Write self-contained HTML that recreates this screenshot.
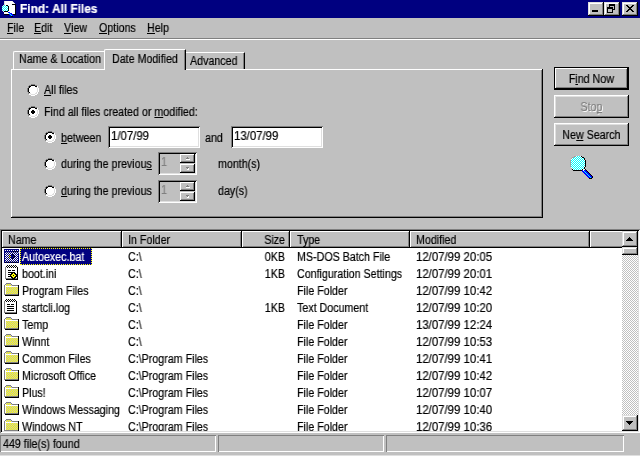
<!DOCTYPE html>
<html><head><meta charset="utf-8">
<style>
*{margin:0;padding:0;box-sizing:border-box}
html,body{width:640px;height:456px;overflow:hidden;background:#c0c0c0}
body{position:relative;font-family:"Liberation Sans",sans-serif;font-size:12px;color:#000;line-height:13px}
.a{position:absolute}
.t{position:absolute;white-space:nowrap;transform:scaleX(.89);transform-origin:0 0;will-change:transform;-webkit-text-stroke:0.2px currentColor}
.n{transform:scaleX(.95)}
u{text-decoration:none;position:relative}
u:after{content:"";position:absolute;left:0;right:0;bottom:1px;height:1px;background:currentColor}
#title{left:0;top:0;width:640px;height:18px;background:#000080}
#title .txt{left:20px;top:3px;color:#fff;font-weight:bold;transform:scaleX(.99)}
.tb{position:absolute;top:2px;width:16px;height:14px;background:#c0c0c0;
 box-shadow:inset -1px -1px #000,inset 1px 1px #dfdfdf,inset -2px -2px #808080,inset 2px 2px #fff}
.menu .t{top:22px}
.field{position:absolute;background:#fff;box-shadow:inset 1px 1px #808080,inset -1px -1px #fff,inset 2px 2px #000,inset -2px -2px #dfdfdf}
.radio{position:absolute;width:12px;height:12px}
.btn{position:absolute;left:554px;width:75px;height:23px;background:#c0c0c0;
 box-shadow:inset -1px -1px #000,inset 1px 1px #fff,inset -2px -2px #808080,inset 2px 2px #dfdfdf}
.btn .t{left:0;width:84px;text-align:center}
.hdr{position:absolute;top:231px;height:17px;background:#c0c0c0;
 box-shadow:inset -1px -1px #000,inset 1px 1px #fff,inset -2px -2px #808080}
.hdr .t{top:3px}
#list{position:absolute;left:0;top:229px;width:640px;height:204px;background:#fff;
 box-shadow:inset 1px 1px #808080,inset -1px -1px #fff,inset 2px 2px #000,inset -2px -2px #dfdfdf}
#rows{position:absolute;left:2px;top:248px;width:620px;height:183px;overflow:hidden}
.row{position:absolute;left:0;width:620px;height:17px}
.row .t{top:3px}
.ico{position:absolute}
.nm{left:20px}
.c2{left:126px}
.sz{left:190px;width:93px;text-align:right;transform-origin:100% 0}
.c4{left:295px}
.c5{left:414px}
.sel{color:#fff}
.selbox{position:absolute;left:18px;top:0;width:72px;height:17px;background:#000080;outline:1px dotted #ffff00;outline-offset:-1px}
.sp{position:absolute;top:435px;height:17px;box-shadow:inset 1px 1px #808080,inset -1px -1px #fff}
.dis{color:#808080;text-shadow:1px 1px #fff}
.spin{position:absolute;left:158px;width:39px;height:23px;background:#c0c0c0;
 box-shadow:inset 1px 1px #808080,inset -1px -1px #fff,inset 2px 2px #000,inset -2px -2px #dfdfdf}
.sbtn{position:absolute;left:22px;width:15px;height:9px;background:#c0c0c0;
 box-shadow:inset -1px -1px #000,inset 1px 1px #fff,inset -2px -2px #808080}
.tab{position:absolute;background:#c0c0c0}
.sb{box-shadow:inset -1px -1px #000,inset 1px 1px #dfdfdf,inset -2px -2px #808080,inset 2px 2px #fff}
</style></head><body>

<!-- title bar -->
<div id="title" class="a">
 <svg class="a" style="left:0px;top:0px" width="16" height="17" shape-rendering="crispEdges"><rect x="4" y="1" width="1" height="1" fill="#dfdfdf"/><rect x="5" y="1" width="7" height="1" fill="#ffffff"/><rect x="12" y="1" width="1" height="1" fill="#dfdfdf"/><rect x="4" y="2" width="1" height="1" fill="#dfdfdf"/><rect x="5" y="2" width="8" height="1" fill="#ffffff"/><rect x="13" y="2" width="1" height="1" fill="#dfdfdf"/><rect x="4" y="3" width="1" height="1" fill="#dfdfdf"/><rect x="5" y="3" width="9" height="1" fill="#ffffff"/><rect x="14" y="3" width="1" height="1" fill="#dfdfdf"/><rect x="4" y="4" width="1" height="1" fill="#dfdfdf"/><rect x="5" y="4" width="7" height="1" fill="#ffffff"/><rect x="12" y="4" width="4" height="1" fill="#000000"/><rect x="3" y="5" width="1" height="1" fill="#dfdfdf"/><rect x="4" y="5" width="1" height="1" fill="#00ffff"/><rect x="5" y="5" width="1" height="1" fill="#ffffff"/><rect x="6" y="5" width="2" height="1" fill="#000000"/><rect x="8" y="5" width="7" height="1" fill="#ffffff"/><rect x="15" y="5" width="1" height="1" fill="#000000"/><rect x="2" y="6" width="1" height="1" fill="#dfdfdf"/><rect x="3" y="6" width="1" height="1" fill="#00ffff"/><rect x="4" y="6" width="1" height="1" fill="#ffffff"/><rect x="5" y="6" width="1" height="1" fill="#00ffff"/><rect x="6" y="6" width="1" height="1" fill="#ffffff"/><rect x="7" y="6" width="1" height="1" fill="#00ffff"/><rect x="8" y="6" width="1" height="1" fill="#000000"/><rect x="9" y="6" width="6" height="1" fill="#ffffff"/><rect x="15" y="6" width="1" height="1" fill="#000000"/><rect x="2" y="7" width="1" height="1" fill="#00ffff"/><rect x="3" y="7" width="1" height="1" fill="#ffffff"/><rect x="4" y="7" width="1" height="1" fill="#00ffff"/><rect x="5" y="7" width="1" height="1" fill="#ffffff"/><rect x="6" y="7" width="1" height="1" fill="#00ffff"/><rect x="7" y="7" width="1" height="1" fill="#ffffff"/><rect x="8" y="7" width="1" height="1" fill="#000000"/><rect x="9" y="7" width="6" height="1" fill="#ffffff"/><rect x="15" y="7" width="1" height="1" fill="#000000"/><rect x="2" y="8" width="1" height="1" fill="#ffffff"/><rect x="3" y="8" width="1" height="1" fill="#00ffff"/><rect x="4" y="8" width="1" height="1" fill="#ffffff"/><rect x="5" y="8" width="1" height="1" fill="#00ffff"/><rect x="6" y="8" width="1" height="1" fill="#ffffff"/><rect x="7" y="8" width="1" height="1" fill="#00ffff"/><rect x="8" y="8" width="1" height="1" fill="#000000"/><rect x="9" y="8" width="6" height="1" fill="#ffffff"/><rect x="15" y="8" width="1" height="1" fill="#000000"/><rect x="2" y="9" width="1" height="1" fill="#00ffff"/><rect x="3" y="9" width="1" height="1" fill="#ffffff"/><rect x="4" y="9" width="1" height="1" fill="#00ffff"/><rect x="5" y="9" width="1" height="1" fill="#ffffff"/><rect x="6" y="9" width="1" height="1" fill="#00ffff"/><rect x="7" y="9" width="1" height="1" fill="#ffffff"/><rect x="8" y="9" width="1" height="1" fill="#000000"/><rect x="9" y="9" width="6" height="1" fill="#ffffff"/><rect x="15" y="9" width="1" height="1" fill="#000000"/><rect x="2" y="10" width="1" height="1" fill="#dfdfdf"/><rect x="3" y="10" width="1" height="1" fill="#00ffff"/><rect x="4" y="10" width="1" height="1" fill="#ffffff"/><rect x="5" y="10" width="1" height="1" fill="#00ffff"/><rect x="6" y="10" width="1" height="1" fill="#ffffff"/><rect x="7" y="10" width="1" height="1" fill="#00ffff"/><rect x="8" y="10" width="1" height="1" fill="#000000"/><rect x="9" y="10" width="6" height="1" fill="#ffffff"/><rect x="15" y="10" width="1" height="1" fill="#000000"/><rect x="3" y="11" width="1" height="1" fill="#dfdfdf"/><rect x="4" y="11" width="4" height="1" fill="#000000"/><rect x="8" y="11" width="7" height="1" fill="#ffffff"/><rect x="15" y="11" width="1" height="1" fill="#000000"/><rect x="4" y="12" width="4" height="1" fill="#ffffff"/><rect x="8" y="12" width="2" height="1" fill="#0000ff"/><rect x="10" y="12" width="5" height="1" fill="#ffffff"/><rect x="15" y="12" width="1" height="1" fill="#000000"/><rect x="4" y="13" width="5" height="1" fill="#ffffff"/><rect x="9" y="13" width="1" height="1" fill="#00ffff"/><rect x="10" y="13" width="2" height="1" fill="#0000ff"/><rect x="12" y="13" width="3" height="1" fill="#ffffff"/><rect x="15" y="13" width="1" height="1" fill="#000000"/><rect x="4" y="14" width="5" height="1" fill="#000000"/><rect x="9" y="14" width="1" height="1" fill="#0000ff"/><rect x="10" y="14" width="1" height="1" fill="#00ffff"/><rect x="11" y="14" width="2" height="1" fill="#0000ff"/><rect x="13" y="14" width="3" height="1" fill="#000000"/><rect x="10" y="15" width="1" height="1" fill="#0000ff"/><rect x="11" y="15" width="1" height="1" fill="#00ffff"/><rect x="12" y="15" width="2" height="1" fill="#0000ff"/><rect x="11" y="16" width="2" height="1" fill="#000000"/></svg>
 <div class="t txt">Find: All Files</div>
 <div class="tb" style="left:588px"><div class="a" style="left:4px;top:8px;width:6px;height:2px;background:#000"></div></div>
 <div class="tb" style="left:604px">
  <div class="a" style="left:5px;top:2px;width:6px;height:6px;border:1px solid #000;border-top-width:2px"></div>
  <div class="a" style="left:3px;top:5px;width:6px;height:6px;border:1px solid #000;border-top-width:2px;background:#c0c0c0"></div>
 </div>
 <div class="tb" style="left:622px">
  <svg class="a" style="left:4px;top:3px" width="8" height="7" viewBox="0 0 8 7" shape-rendering="crispEdges"><path d="M0 0h2v1h1v1h2v-1h1v-1h2v1h-1v1h-1v1h-1v1h1v1h1v1h1v1h-2v-1h-1v-1h-2v1h-1v1h-2v-1h1v-1h1v-1h1v-1h-1v-1h-1v-1h-1z" fill="#000"/></svg>
 </div>
</div>

<!-- menu -->
<div class="menu">
 <div class="t" style="left:7px"><u>F</u>ile</div>
 <div class="t" style="left:34px"><u>E</u>dit</div>
 <div class="t" style="left:64px"><u>V</u>iew</div>
 <div class="t" style="left:99px"><u>O</u>ptions</div>
 <div class="t" style="left:147px"><u>H</u>elp</div>
</div>
<div class="a" style="left:0;top:38px;width:640px;height:1px;background:#808080"></div>
<div class="a" style="left:0;top:39px;width:640px;height:1px;background:#fff"></div>

<!-- tabs -->
<div class="tab" style="left:13px;top:51px;width:91px;height:18px;border-left:1px solid #fff;border-top:1px solid #fff;border-top-left-radius:2px"></div>
<div class="t" style="left:19px;top:53px">Name &amp; Location</div>
<div class="tab" style="left:186px;top:52px;width:59px;height:17px;border-top:1px solid #fff;border-right:1px solid #000;box-shadow:inset -1px 0 #808080"></div>
<div class="t" style="left:190px;top:55px">Advanced</div>
<!-- panel -->
<div class="a" style="left:11px;top:69px;width:532px;height:149px;box-shadow:inset -1px -1px #000,inset 1px 1px #fff,inset -2px -2px #808080"></div>
<div class="tab" style="left:104px;top:49px;width:82px;height:21px;border-left:1px solid #fff;border-top:1px solid #fff;border-right:1px solid #000;box-shadow:inset -1px 0 #808080;border-top-left-radius:2px;border-top-right-radius:1px"></div>
<div class="t" style="left:112px;top:53px">Date Modified</div>

<!-- radios -->
<svg class="a" width="0" height="0"></svg>
<svg class="a" style="left:27px;top:84px" width="12" height="12" shape-rendering="crispEdges"><rect x="4" y="0" width="4" height="1" fill="#808080"/><rect x="2" y="1" width="2" height="1" fill="#808080"/><rect x="4" y="1" width="4" height="1" fill="#000"/><rect x="8" y="1" width="2" height="1" fill="#808080"/><rect x="1" y="2" width="1" height="1" fill="#808080"/><rect x="2" y="2" width="2" height="1" fill="#000"/><rect x="4" y="2" width="4" height="1" fill="#fff"/><rect x="8" y="2" width="2" height="1" fill="#000"/><rect x="10" y="2" width="1" height="1" fill="#fff"/><rect x="1" y="3" width="1" height="1" fill="#808080"/><rect x="2" y="3" width="1" height="1" fill="#000"/><rect x="3" y="3" width="6" height="1" fill="#fff"/><rect x="9" y="3" width="1" height="1" fill="#dfdfdf"/><rect x="10" y="3" width="1" height="1" fill="#fff"/><rect x="0" y="4" width="1" height="1" fill="#808080"/><rect x="1" y="4" width="1" height="1" fill="#000"/><rect x="2" y="4" width="8" height="1" fill="#fff"/><rect x="10" y="4" width="1" height="1" fill="#dfdfdf"/><rect x="11" y="4" width="1" height="1" fill="#fff"/><rect x="0" y="5" width="1" height="1" fill="#808080"/><rect x="1" y="5" width="1" height="1" fill="#000"/><rect x="2" y="5" width="8" height="1" fill="#fff"/><rect x="10" y="5" width="1" height="1" fill="#dfdfdf"/><rect x="11" y="5" width="1" height="1" fill="#fff"/><rect x="0" y="6" width="1" height="1" fill="#808080"/><rect x="1" y="6" width="1" height="1" fill="#000"/><rect x="2" y="6" width="8" height="1" fill="#fff"/><rect x="10" y="6" width="1" height="1" fill="#dfdfdf"/><rect x="11" y="6" width="1" height="1" fill="#fff"/><rect x="0" y="7" width="1" height="1" fill="#808080"/><rect x="1" y="7" width="1" height="1" fill="#000"/><rect x="2" y="7" width="8" height="1" fill="#fff"/><rect x="10" y="7" width="1" height="1" fill="#dfdfdf"/><rect x="11" y="7" width="1" height="1" fill="#fff"/><rect x="1" y="8" width="1" height="1" fill="#808080"/><rect x="2" y="8" width="1" height="1" fill="#000"/><rect x="3" y="8" width="6" height="1" fill="#fff"/><rect x="9" y="8" width="1" height="1" fill="#dfdfdf"/><rect x="10" y="8" width="1" height="1" fill="#fff"/><rect x="1" y="9" width="1" height="1" fill="#808080"/><rect x="2" y="9" width="2" height="1" fill="#dfdfdf"/><rect x="4" y="9" width="4" height="1" fill="#fff"/><rect x="8" y="9" width="2" height="1" fill="#dfdfdf"/><rect x="10" y="9" width="1" height="1" fill="#fff"/><rect x="2" y="10" width="2" height="1" fill="#fff"/><rect x="4" y="10" width="4" height="1" fill="#dfdfdf"/><rect x="8" y="10" width="2" height="1" fill="#fff"/><rect x="4" y="11" width="4" height="1" fill="#fff"/></svg>
<div class="t" style="left:44px;top:84px"><u>A</u>ll files</div>
<svg class="a" style="left:27px;top:106px" width="12" height="12" shape-rendering="crispEdges"><rect x="4" y="0" width="4" height="1" fill="#808080"/><rect x="2" y="1" width="2" height="1" fill="#808080"/><rect x="4" y="1" width="4" height="1" fill="#000"/><rect x="8" y="1" width="2" height="1" fill="#808080"/><rect x="1" y="2" width="1" height="1" fill="#808080"/><rect x="2" y="2" width="2" height="1" fill="#000"/><rect x="4" y="2" width="4" height="1" fill="#fff"/><rect x="8" y="2" width="2" height="1" fill="#000"/><rect x="10" y="2" width="1" height="1" fill="#fff"/><rect x="1" y="3" width="1" height="1" fill="#808080"/><rect x="2" y="3" width="1" height="1" fill="#000"/><rect x="3" y="3" width="6" height="1" fill="#fff"/><rect x="9" y="3" width="1" height="1" fill="#dfdfdf"/><rect x="10" y="3" width="1" height="1" fill="#fff"/><rect x="0" y="4" width="1" height="1" fill="#808080"/><rect x="1" y="4" width="1" height="1" fill="#000"/><rect x="2" y="4" width="8" height="1" fill="#fff"/><rect x="10" y="4" width="1" height="1" fill="#dfdfdf"/><rect x="11" y="4" width="1" height="1" fill="#fff"/><rect x="0" y="5" width="1" height="1" fill="#808080"/><rect x="1" y="5" width="1" height="1" fill="#000"/><rect x="2" y="5" width="8" height="1" fill="#fff"/><rect x="10" y="5" width="1" height="1" fill="#dfdfdf"/><rect x="11" y="5" width="1" height="1" fill="#fff"/><rect x="0" y="6" width="1" height="1" fill="#808080"/><rect x="1" y="6" width="1" height="1" fill="#000"/><rect x="2" y="6" width="8" height="1" fill="#fff"/><rect x="10" y="6" width="1" height="1" fill="#dfdfdf"/><rect x="11" y="6" width="1" height="1" fill="#fff"/><rect x="0" y="7" width="1" height="1" fill="#808080"/><rect x="1" y="7" width="1" height="1" fill="#000"/><rect x="2" y="7" width="8" height="1" fill="#fff"/><rect x="10" y="7" width="1" height="1" fill="#dfdfdf"/><rect x="11" y="7" width="1" height="1" fill="#fff"/><rect x="1" y="8" width="1" height="1" fill="#808080"/><rect x="2" y="8" width="1" height="1" fill="#000"/><rect x="3" y="8" width="6" height="1" fill="#fff"/><rect x="9" y="8" width="1" height="1" fill="#dfdfdf"/><rect x="10" y="8" width="1" height="1" fill="#fff"/><rect x="1" y="9" width="1" height="1" fill="#808080"/><rect x="2" y="9" width="2" height="1" fill="#dfdfdf"/><rect x="4" y="9" width="4" height="1" fill="#fff"/><rect x="8" y="9" width="2" height="1" fill="#dfdfdf"/><rect x="10" y="9" width="1" height="1" fill="#fff"/><rect x="2" y="10" width="2" height="1" fill="#fff"/><rect x="4" y="10" width="4" height="1" fill="#dfdfdf"/><rect x="8" y="10" width="2" height="1" fill="#fff"/><rect x="4" y="11" width="4" height="1" fill="#fff"/><rect x="5" y="4" width="2" height="4" fill="#000"/><rect x="4" y="5" width="4" height="2" fill="#000"/></svg>
<div class="t" style="left:44px;top:106px">Find all files created or <u>m</u>odified:</div>
<svg class="a" style="left:44px;top:131px" width="12" height="12" shape-rendering="crispEdges"><rect x="4" y="0" width="4" height="1" fill="#808080"/><rect x="2" y="1" width="2" height="1" fill="#808080"/><rect x="4" y="1" width="4" height="1" fill="#000"/><rect x="8" y="1" width="2" height="1" fill="#808080"/><rect x="1" y="2" width="1" height="1" fill="#808080"/><rect x="2" y="2" width="2" height="1" fill="#000"/><rect x="4" y="2" width="4" height="1" fill="#fff"/><rect x="8" y="2" width="2" height="1" fill="#000"/><rect x="10" y="2" width="1" height="1" fill="#fff"/><rect x="1" y="3" width="1" height="1" fill="#808080"/><rect x="2" y="3" width="1" height="1" fill="#000"/><rect x="3" y="3" width="6" height="1" fill="#fff"/><rect x="9" y="3" width="1" height="1" fill="#dfdfdf"/><rect x="10" y="3" width="1" height="1" fill="#fff"/><rect x="0" y="4" width="1" height="1" fill="#808080"/><rect x="1" y="4" width="1" height="1" fill="#000"/><rect x="2" y="4" width="8" height="1" fill="#fff"/><rect x="10" y="4" width="1" height="1" fill="#dfdfdf"/><rect x="11" y="4" width="1" height="1" fill="#fff"/><rect x="0" y="5" width="1" height="1" fill="#808080"/><rect x="1" y="5" width="1" height="1" fill="#000"/><rect x="2" y="5" width="8" height="1" fill="#fff"/><rect x="10" y="5" width="1" height="1" fill="#dfdfdf"/><rect x="11" y="5" width="1" height="1" fill="#fff"/><rect x="0" y="6" width="1" height="1" fill="#808080"/><rect x="1" y="6" width="1" height="1" fill="#000"/><rect x="2" y="6" width="8" height="1" fill="#fff"/><rect x="10" y="6" width="1" height="1" fill="#dfdfdf"/><rect x="11" y="6" width="1" height="1" fill="#fff"/><rect x="0" y="7" width="1" height="1" fill="#808080"/><rect x="1" y="7" width="1" height="1" fill="#000"/><rect x="2" y="7" width="8" height="1" fill="#fff"/><rect x="10" y="7" width="1" height="1" fill="#dfdfdf"/><rect x="11" y="7" width="1" height="1" fill="#fff"/><rect x="1" y="8" width="1" height="1" fill="#808080"/><rect x="2" y="8" width="1" height="1" fill="#000"/><rect x="3" y="8" width="6" height="1" fill="#fff"/><rect x="9" y="8" width="1" height="1" fill="#dfdfdf"/><rect x="10" y="8" width="1" height="1" fill="#fff"/><rect x="1" y="9" width="1" height="1" fill="#808080"/><rect x="2" y="9" width="2" height="1" fill="#dfdfdf"/><rect x="4" y="9" width="4" height="1" fill="#fff"/><rect x="8" y="9" width="2" height="1" fill="#dfdfdf"/><rect x="10" y="9" width="1" height="1" fill="#fff"/><rect x="2" y="10" width="2" height="1" fill="#fff"/><rect x="4" y="10" width="4" height="1" fill="#dfdfdf"/><rect x="8" y="10" width="2" height="1" fill="#fff"/><rect x="4" y="11" width="4" height="1" fill="#fff"/><rect x="5" y="4" width="2" height="4" fill="#000"/><rect x="4" y="5" width="4" height="2" fill="#000"/></svg>
<div class="t" style="left:61px;top:132px"><u>b</u>etween</div>
<div class="field" style="left:108px;top:126px;width:92px;height:22px"></div>
<div class="t n" style="left:111px;top:130px">1/07/99</div>
<div class="t" style="left:205px;top:132px">and</div>
<div class="field" style="left:231px;top:126px;width:92px;height:22px"></div>
<div class="t n" style="left:234px;top:130px">13/07/99</div>
<svg class="a" style="left:44px;top:158px" width="12" height="12" shape-rendering="crispEdges"><rect x="4" y="0" width="4" height="1" fill="#808080"/><rect x="2" y="1" width="2" height="1" fill="#808080"/><rect x="4" y="1" width="4" height="1" fill="#000"/><rect x="8" y="1" width="2" height="1" fill="#808080"/><rect x="1" y="2" width="1" height="1" fill="#808080"/><rect x="2" y="2" width="2" height="1" fill="#000"/><rect x="4" y="2" width="4" height="1" fill="#fff"/><rect x="8" y="2" width="2" height="1" fill="#000"/><rect x="10" y="2" width="1" height="1" fill="#fff"/><rect x="1" y="3" width="1" height="1" fill="#808080"/><rect x="2" y="3" width="1" height="1" fill="#000"/><rect x="3" y="3" width="6" height="1" fill="#fff"/><rect x="9" y="3" width="1" height="1" fill="#dfdfdf"/><rect x="10" y="3" width="1" height="1" fill="#fff"/><rect x="0" y="4" width="1" height="1" fill="#808080"/><rect x="1" y="4" width="1" height="1" fill="#000"/><rect x="2" y="4" width="8" height="1" fill="#fff"/><rect x="10" y="4" width="1" height="1" fill="#dfdfdf"/><rect x="11" y="4" width="1" height="1" fill="#fff"/><rect x="0" y="5" width="1" height="1" fill="#808080"/><rect x="1" y="5" width="1" height="1" fill="#000"/><rect x="2" y="5" width="8" height="1" fill="#fff"/><rect x="10" y="5" width="1" height="1" fill="#dfdfdf"/><rect x="11" y="5" width="1" height="1" fill="#fff"/><rect x="0" y="6" width="1" height="1" fill="#808080"/><rect x="1" y="6" width="1" height="1" fill="#000"/><rect x="2" y="6" width="8" height="1" fill="#fff"/><rect x="10" y="6" width="1" height="1" fill="#dfdfdf"/><rect x="11" y="6" width="1" height="1" fill="#fff"/><rect x="0" y="7" width="1" height="1" fill="#808080"/><rect x="1" y="7" width="1" height="1" fill="#000"/><rect x="2" y="7" width="8" height="1" fill="#fff"/><rect x="10" y="7" width="1" height="1" fill="#dfdfdf"/><rect x="11" y="7" width="1" height="1" fill="#fff"/><rect x="1" y="8" width="1" height="1" fill="#808080"/><rect x="2" y="8" width="1" height="1" fill="#000"/><rect x="3" y="8" width="6" height="1" fill="#fff"/><rect x="9" y="8" width="1" height="1" fill="#dfdfdf"/><rect x="10" y="8" width="1" height="1" fill="#fff"/><rect x="1" y="9" width="1" height="1" fill="#808080"/><rect x="2" y="9" width="2" height="1" fill="#dfdfdf"/><rect x="4" y="9" width="4" height="1" fill="#fff"/><rect x="8" y="9" width="2" height="1" fill="#dfdfdf"/><rect x="10" y="9" width="1" height="1" fill="#fff"/><rect x="2" y="10" width="2" height="1" fill="#fff"/><rect x="4" y="10" width="4" height="1" fill="#dfdfdf"/><rect x="8" y="10" width="2" height="1" fill="#fff"/><rect x="4" y="11" width="4" height="1" fill="#fff"/></svg>
<div class="t" style="left:61px;top:158px">during the previou<u>s</u></div>
<div class="spin" style="top:152px"><div class="t" style="left:3px;top:4px;color:#808080">1</div><div class="sbtn" style="top:2px"><svg class="a" style="left:5px;top:3px" width="5" height="4" shape-rendering="crispEdges"><rect x="2" y="0" width="1" height="1" fill="#808080"/><rect x="1" y="1" width="3" height="1" fill="#808080"/><rect x="1" y="2" width="4" height="1" fill="#fff"/></svg></div><div class="sbtn" style="top:12px"><svg class="a" style="left:5px;top:3px" width="5" height="4" shape-rendering="crispEdges"><rect x="1" y="0" width="3" height="1" fill="#808080"/><rect x="2" y="1" width="1" height="1" fill="#808080"/><rect x="3" y="1" width="1" height="1" fill="#fff"/><rect x="2" y="2" width="2" height="1" fill="#fff"/></svg></div></div>
<div class="t" style="left:218px;top:158px">month(s)</div>
<svg class="a" style="left:44px;top:185px" width="12" height="12" shape-rendering="crispEdges"><rect x="4" y="0" width="4" height="1" fill="#808080"/><rect x="2" y="1" width="2" height="1" fill="#808080"/><rect x="4" y="1" width="4" height="1" fill="#000"/><rect x="8" y="1" width="2" height="1" fill="#808080"/><rect x="1" y="2" width="1" height="1" fill="#808080"/><rect x="2" y="2" width="2" height="1" fill="#000"/><rect x="4" y="2" width="4" height="1" fill="#fff"/><rect x="8" y="2" width="2" height="1" fill="#000"/><rect x="10" y="2" width="1" height="1" fill="#fff"/><rect x="1" y="3" width="1" height="1" fill="#808080"/><rect x="2" y="3" width="1" height="1" fill="#000"/><rect x="3" y="3" width="6" height="1" fill="#fff"/><rect x="9" y="3" width="1" height="1" fill="#dfdfdf"/><rect x="10" y="3" width="1" height="1" fill="#fff"/><rect x="0" y="4" width="1" height="1" fill="#808080"/><rect x="1" y="4" width="1" height="1" fill="#000"/><rect x="2" y="4" width="8" height="1" fill="#fff"/><rect x="10" y="4" width="1" height="1" fill="#dfdfdf"/><rect x="11" y="4" width="1" height="1" fill="#fff"/><rect x="0" y="5" width="1" height="1" fill="#808080"/><rect x="1" y="5" width="1" height="1" fill="#000"/><rect x="2" y="5" width="8" height="1" fill="#fff"/><rect x="10" y="5" width="1" height="1" fill="#dfdfdf"/><rect x="11" y="5" width="1" height="1" fill="#fff"/><rect x="0" y="6" width="1" height="1" fill="#808080"/><rect x="1" y="6" width="1" height="1" fill="#000"/><rect x="2" y="6" width="8" height="1" fill="#fff"/><rect x="10" y="6" width="1" height="1" fill="#dfdfdf"/><rect x="11" y="6" width="1" height="1" fill="#fff"/><rect x="0" y="7" width="1" height="1" fill="#808080"/><rect x="1" y="7" width="1" height="1" fill="#000"/><rect x="2" y="7" width="8" height="1" fill="#fff"/><rect x="10" y="7" width="1" height="1" fill="#dfdfdf"/><rect x="11" y="7" width="1" height="1" fill="#fff"/><rect x="1" y="8" width="1" height="1" fill="#808080"/><rect x="2" y="8" width="1" height="1" fill="#000"/><rect x="3" y="8" width="6" height="1" fill="#fff"/><rect x="9" y="8" width="1" height="1" fill="#dfdfdf"/><rect x="10" y="8" width="1" height="1" fill="#fff"/><rect x="1" y="9" width="1" height="1" fill="#808080"/><rect x="2" y="9" width="2" height="1" fill="#dfdfdf"/><rect x="4" y="9" width="4" height="1" fill="#fff"/><rect x="8" y="9" width="2" height="1" fill="#dfdfdf"/><rect x="10" y="9" width="1" height="1" fill="#fff"/><rect x="2" y="10" width="2" height="1" fill="#fff"/><rect x="4" y="10" width="4" height="1" fill="#dfdfdf"/><rect x="8" y="10" width="2" height="1" fill="#fff"/><rect x="4" y="11" width="4" height="1" fill="#fff"/></svg>
<div class="t" style="left:61px;top:185px"><u>d</u>uring the previous</div>
<div class="spin" style="top:180px"><div class="t" style="left:3px;top:4px;color:#808080">1</div><div class="sbtn" style="top:2px"><svg class="a" style="left:5px;top:3px" width="5" height="4" shape-rendering="crispEdges"><rect x="2" y="0" width="1" height="1" fill="#808080"/><rect x="1" y="1" width="3" height="1" fill="#808080"/><rect x="1" y="2" width="4" height="1" fill="#fff"/></svg></div><div class="sbtn" style="top:12px"><svg class="a" style="left:5px;top:3px" width="5" height="4" shape-rendering="crispEdges"><rect x="1" y="0" width="3" height="1" fill="#808080"/><rect x="2" y="1" width="1" height="1" fill="#808080"/><rect x="3" y="1" width="1" height="1" fill="#fff"/><rect x="2" y="2" width="2" height="1" fill="#fff"/></svg></div></div>
<div class="t" style="left:218px;top:185px">day(s)</div>

<!-- buttons -->
<div class="btn" style="top:67px;box-shadow:inset 0 0 0 1px #000,inset -2px -2px #000,inset 2px 2px #fff,inset -3px -3px #808080"><div class="t" style="top:6px">F<u>i</u>nd Now</div></div>
<div class="btn" style="top:95px"><div class="t dis" style="top:6px">Sto<u>p</u></div></div>
<div class="btn" style="top:123px"><div class="t" style="top:6px">Ne<u>w</u> Search</div></div>
<svg class="a" style="left:568px;top:154px" width="26" height="26" shape-rendering="crispEdges"><rect x="6" y="2" width="2" height="1" fill="#a0a0a0"/><rect x="8" y="2" width="1" height="1" fill="#ffffff"/><rect x="9" y="2" width="1" height="1" fill="#00ffff"/><rect x="10" y="2" width="1" height="1" fill="#ffffff"/><rect x="11" y="2" width="1" height="1" fill="#00ffff"/><rect x="12" y="2" width="1" height="1" fill="#ffffff"/><rect x="13" y="2" width="1" height="1" fill="#000000"/><rect x="4" y="3" width="2" height="1" fill="#a0a0a0"/><rect x="6" y="3" width="1" height="1" fill="#00ffff"/><rect x="7" y="3" width="1" height="1" fill="#ffffff"/><rect x="8" y="3" width="1" height="1" fill="#00ffff"/><rect x="9" y="3" width="1" height="1" fill="#ffffff"/><rect x="10" y="3" width="1" height="1" fill="#00ffff"/><rect x="11" y="3" width="1" height="1" fill="#ffffff"/><rect x="12" y="3" width="1" height="1" fill="#00ffff"/><rect x="13" y="3" width="1" height="1" fill="#ffffff"/><rect x="14" y="3" width="2" height="1" fill="#000000"/><rect x="3" y="4" width="1" height="1" fill="#a0a0a0"/><rect x="4" y="4" width="1" height="1" fill="#ffffff"/><rect x="5" y="4" width="1" height="1" fill="#00ffff"/><rect x="6" y="4" width="1" height="1" fill="#ffffff"/><rect x="7" y="4" width="1" height="1" fill="#00ffff"/><rect x="8" y="4" width="1" height="1" fill="#ffffff"/><rect x="9" y="4" width="1" height="1" fill="#00ffff"/><rect x="10" y="4" width="1" height="1" fill="#ffffff"/><rect x="11" y="4" width="1" height="1" fill="#00ffff"/><rect x="12" y="4" width="1" height="1" fill="#ffffff"/><rect x="13" y="4" width="1" height="1" fill="#00ffff"/><rect x="14" y="4" width="1" height="1" fill="#ffffff"/><rect x="15" y="4" width="1" height="1" fill="#00ffff"/><rect x="16" y="4" width="1" height="1" fill="#000000"/><rect x="3" y="5" width="1" height="1" fill="#ffffff"/><rect x="4" y="5" width="1" height="1" fill="#00ffff"/><rect x="5" y="5" width="1" height="1" fill="#ffffff"/><rect x="6" y="5" width="1" height="1" fill="#00ffff"/><rect x="7" y="5" width="1" height="1" fill="#ffffff"/><rect x="8" y="5" width="1" height="1" fill="#00ffff"/><rect x="9" y="5" width="1" height="1" fill="#ffffff"/><rect x="10" y="5" width="1" height="1" fill="#00ffff"/><rect x="11" y="5" width="1" height="1" fill="#ffffff"/><rect x="12" y="5" width="1" height="1" fill="#00ffff"/><rect x="13" y="5" width="1" height="1" fill="#ffffff"/><rect x="14" y="5" width="1" height="1" fill="#00ffff"/><rect x="15" y="5" width="1" height="1" fill="#ffffff"/><rect x="16" y="5" width="1" height="1" fill="#000000"/><rect x="2" y="6" width="1" height="1" fill="#a0a0a0"/><rect x="3" y="6" width="1" height="1" fill="#00ffff"/><rect x="4" y="6" width="1" height="1" fill="#ffffff"/><rect x="5" y="6" width="1" height="1" fill="#00ffff"/><rect x="6" y="6" width="1" height="1" fill="#ffffff"/><rect x="7" y="6" width="1" height="1" fill="#00ffff"/><rect x="8" y="6" width="1" height="1" fill="#ffffff"/><rect x="9" y="6" width="1" height="1" fill="#00ffff"/><rect x="10" y="6" width="1" height="1" fill="#ffffff"/><rect x="11" y="6" width="1" height="1" fill="#00ffff"/><rect x="12" y="6" width="1" height="1" fill="#ffffff"/><rect x="13" y="6" width="1" height="1" fill="#00ffff"/><rect x="14" y="6" width="1" height="1" fill="#ffffff"/><rect x="15" y="6" width="1" height="1" fill="#00ffff"/><rect x="16" y="6" width="1" height="1" fill="#ffffff"/><rect x="17" y="6" width="1" height="1" fill="#000000"/><rect x="2" y="7" width="1" height="1" fill="#a0a0a0"/><rect x="3" y="7" width="1" height="1" fill="#ffffff"/><rect x="4" y="7" width="1" height="1" fill="#00ffff"/><rect x="5" y="7" width="1" height="1" fill="#ffffff"/><rect x="6" y="7" width="1" height="1" fill="#00ffff"/><rect x="7" y="7" width="1" height="1" fill="#ffffff"/><rect x="8" y="7" width="1" height="1" fill="#00ffff"/><rect x="9" y="7" width="1" height="1" fill="#ffffff"/><rect x="10" y="7" width="1" height="1" fill="#00ffff"/><rect x="11" y="7" width="1" height="1" fill="#ffffff"/><rect x="12" y="7" width="1" height="1" fill="#00ffff"/><rect x="13" y="7" width="1" height="1" fill="#ffffff"/><rect x="14" y="7" width="1" height="1" fill="#00ffff"/><rect x="15" y="7" width="1" height="1" fill="#ffffff"/><rect x="16" y="7" width="1" height="1" fill="#00ffff"/><rect x="17" y="7" width="1" height="1" fill="#000000"/><rect x="2" y="8" width="1" height="1" fill="#a0a0a0"/><rect x="3" y="8" width="1" height="1" fill="#00ffff"/><rect x="4" y="8" width="1" height="1" fill="#ffffff"/><rect x="5" y="8" width="1" height="1" fill="#00ffff"/><rect x="6" y="8" width="1" height="1" fill="#ffffff"/><rect x="7" y="8" width="1" height="1" fill="#00ffff"/><rect x="8" y="8" width="1" height="1" fill="#ffffff"/><rect x="9" y="8" width="1" height="1" fill="#00ffff"/><rect x="10" y="8" width="1" height="1" fill="#ffffff"/><rect x="11" y="8" width="1" height="1" fill="#00ffff"/><rect x="12" y="8" width="1" height="1" fill="#ffffff"/><rect x="13" y="8" width="1" height="1" fill="#00ffff"/><rect x="14" y="8" width="1" height="1" fill="#ffffff"/><rect x="15" y="8" width="1" height="1" fill="#00ffff"/><rect x="16" y="8" width="1" height="1" fill="#ffffff"/><rect x="17" y="8" width="1" height="1" fill="#000000"/><rect x="2" y="9" width="1" height="1" fill="#a0a0a0"/><rect x="3" y="9" width="1" height="1" fill="#ffffff"/><rect x="4" y="9" width="1" height="1" fill="#00ffff"/><rect x="5" y="9" width="1" height="1" fill="#ffffff"/><rect x="6" y="9" width="1" height="1" fill="#00ffff"/><rect x="7" y="9" width="1" height="1" fill="#ffffff"/><rect x="8" y="9" width="1" height="1" fill="#00ffff"/><rect x="9" y="9" width="1" height="1" fill="#ffffff"/><rect x="10" y="9" width="1" height="1" fill="#00ffff"/><rect x="11" y="9" width="1" height="1" fill="#ffffff"/><rect x="12" y="9" width="1" height="1" fill="#00ffff"/><rect x="13" y="9" width="1" height="1" fill="#ffffff"/><rect x="14" y="9" width="1" height="1" fill="#00ffff"/><rect x="15" y="9" width="1" height="1" fill="#ffffff"/><rect x="16" y="9" width="1" height="1" fill="#00ffff"/><rect x="17" y="9" width="1" height="1" fill="#000000"/><rect x="2" y="10" width="1" height="1" fill="#a0a0a0"/><rect x="3" y="10" width="1" height="1" fill="#00ffff"/><rect x="4" y="10" width="1" height="1" fill="#ffffff"/><rect x="5" y="10" width="1" height="1" fill="#00ffff"/><rect x="6" y="10" width="1" height="1" fill="#ffffff"/><rect x="7" y="10" width="1" height="1" fill="#00ffff"/><rect x="8" y="10" width="1" height="1" fill="#ffffff"/><rect x="9" y="10" width="1" height="1" fill="#00ffff"/><rect x="10" y="10" width="1" height="1" fill="#ffffff"/><rect x="11" y="10" width="1" height="1" fill="#00ffff"/><rect x="12" y="10" width="1" height="1" fill="#ffffff"/><rect x="13" y="10" width="1" height="1" fill="#00ffff"/><rect x="14" y="10" width="1" height="1" fill="#ffffff"/><rect x="15" y="10" width="1" height="1" fill="#00ffff"/><rect x="16" y="10" width="1" height="1" fill="#ffffff"/><rect x="17" y="10" width="1" height="1" fill="#000000"/><rect x="2" y="11" width="1" height="1" fill="#a0a0a0"/><rect x="3" y="11" width="1" height="1" fill="#ffffff"/><rect x="4" y="11" width="1" height="1" fill="#00ffff"/><rect x="5" y="11" width="1" height="1" fill="#ffffff"/><rect x="6" y="11" width="1" height="1" fill="#00ffff"/><rect x="7" y="11" width="1" height="1" fill="#ffffff"/><rect x="8" y="11" width="1" height="1" fill="#00ffff"/><rect x="9" y="11" width="1" height="1" fill="#ffffff"/><rect x="10" y="11" width="1" height="1" fill="#00ffff"/><rect x="11" y="11" width="1" height="1" fill="#ffffff"/><rect x="12" y="11" width="1" height="1" fill="#00ffff"/><rect x="13" y="11" width="1" height="1" fill="#ffffff"/><rect x="14" y="11" width="1" height="1" fill="#00ffff"/><rect x="15" y="11" width="1" height="1" fill="#ffffff"/><rect x="16" y="11" width="1" height="1" fill="#00ffff"/><rect x="17" y="11" width="1" height="1" fill="#000000"/><rect x="2" y="12" width="1" height="1" fill="#a0a0a0"/><rect x="3" y="12" width="1" height="1" fill="#00ffff"/><rect x="4" y="12" width="1" height="1" fill="#ffffff"/><rect x="5" y="12" width="1" height="1" fill="#00ffff"/><rect x="6" y="12" width="1" height="1" fill="#ffffff"/><rect x="7" y="12" width="1" height="1" fill="#00ffff"/><rect x="8" y="12" width="1" height="1" fill="#ffffff"/><rect x="9" y="12" width="1" height="1" fill="#00ffff"/><rect x="10" y="12" width="1" height="1" fill="#ffffff"/><rect x="11" y="12" width="1" height="1" fill="#00ffff"/><rect x="12" y="12" width="1" height="1" fill="#ffffff"/><rect x="13" y="12" width="1" height="1" fill="#00ffff"/><rect x="14" y="12" width="1" height="1" fill="#ffffff"/><rect x="15" y="12" width="1" height="1" fill="#00ffff"/><rect x="16" y="12" width="1" height="1" fill="#ffffff"/><rect x="17" y="12" width="1" height="1" fill="#000000"/><rect x="3" y="13" width="1" height="1" fill="#ffffff"/><rect x="4" y="13" width="1" height="1" fill="#00ffff"/><rect x="5" y="13" width="1" height="1" fill="#ffffff"/><rect x="6" y="13" width="1" height="1" fill="#00ffff"/><rect x="7" y="13" width="1" height="1" fill="#ffffff"/><rect x="8" y="13" width="1" height="1" fill="#00ffff"/><rect x="9" y="13" width="1" height="1" fill="#ffffff"/><rect x="10" y="13" width="1" height="1" fill="#00ffff"/><rect x="11" y="13" width="1" height="1" fill="#ffffff"/><rect x="12" y="13" width="1" height="1" fill="#00ffff"/><rect x="13" y="13" width="1" height="1" fill="#ffffff"/><rect x="14" y="13" width="1" height="1" fill="#00ffff"/><rect x="15" y="13" width="1" height="1" fill="#ffffff"/><rect x="16" y="13" width="1" height="1" fill="#000000"/><rect x="3" y="14" width="1" height="1" fill="#a0a0a0"/><rect x="4" y="14" width="1" height="1" fill="#ffffff"/><rect x="5" y="14" width="1" height="1" fill="#00ffff"/><rect x="6" y="14" width="1" height="1" fill="#ffffff"/><rect x="7" y="14" width="1" height="1" fill="#00ffff"/><rect x="8" y="14" width="1" height="1" fill="#ffffff"/><rect x="9" y="14" width="1" height="1" fill="#00ffff"/><rect x="10" y="14" width="1" height="1" fill="#ffffff"/><rect x="11" y="14" width="1" height="1" fill="#00ffff"/><rect x="12" y="14" width="1" height="1" fill="#ffffff"/><rect x="13" y="14" width="1" height="1" fill="#00ffff"/><rect x="14" y="14" width="1" height="1" fill="#ffffff"/><rect x="15" y="14" width="1" height="1" fill="#00ffff"/><rect x="16" y="14" width="1" height="1" fill="#000000"/><rect x="4" y="15" width="1" height="1" fill="#000000"/><rect x="5" y="15" width="1" height="1" fill="#ffffff"/><rect x="6" y="15" width="1" height="1" fill="#00ffff"/><rect x="7" y="15" width="1" height="1" fill="#ffffff"/><rect x="8" y="15" width="1" height="1" fill="#00ffff"/><rect x="9" y="15" width="1" height="1" fill="#ffffff"/><rect x="10" y="15" width="1" height="1" fill="#00ffff"/><rect x="11" y="15" width="1" height="1" fill="#ffffff"/><rect x="12" y="15" width="1" height="1" fill="#00ffff"/><rect x="13" y="15" width="1" height="1" fill="#ffffff"/><rect x="14" y="15" width="1" height="1" fill="#000000"/><rect x="15" y="15" width="2" height="1" fill="#ffffff"/><rect x="17" y="15" width="1" height="1" fill="#000000"/><rect x="5" y="16" width="9" height="1" fill="#000000"/><rect x="14" y="16" width="1" height="1" fill="#0000ff"/><rect x="15" y="16" width="1" height="1" fill="#ffffff"/><rect x="16" y="16" width="2" height="1" fill="#0000ff"/><rect x="18" y="16" width="1" height="1" fill="#000000"/><rect x="14" y="17" width="2" height="1" fill="#0000ff"/><rect x="16" y="17" width="1" height="1" fill="#00ffff"/><rect x="17" y="17" width="2" height="1" fill="#0000ff"/><rect x="19" y="17" width="1" height="1" fill="#000000"/><rect x="15" y="18" width="2" height="1" fill="#0000ff"/><rect x="17" y="18" width="1" height="1" fill="#00ffff"/><rect x="18" y="18" width="2" height="1" fill="#0000ff"/><rect x="20" y="18" width="1" height="1" fill="#000000"/><rect x="16" y="19" width="2" height="1" fill="#0000ff"/><rect x="18" y="19" width="1" height="1" fill="#00ffff"/><rect x="19" y="19" width="2" height="1" fill="#0000ff"/><rect x="21" y="19" width="1" height="1" fill="#000000"/><rect x="17" y="20" width="2" height="1" fill="#0000ff"/><rect x="19" y="20" width="1" height="1" fill="#00ffff"/><rect x="20" y="20" width="2" height="1" fill="#0000ff"/><rect x="22" y="20" width="1" height="1" fill="#000000"/><rect x="18" y="21" width="2" height="1" fill="#0000ff"/><rect x="20" y="21" width="1" height="1" fill="#00ffff"/><rect x="21" y="21" width="2" height="1" fill="#0000ff"/><rect x="23" y="21" width="1" height="1" fill="#000000"/><rect x="19" y="22" width="2" height="1" fill="#0000ff"/><rect x="21" y="22" width="1" height="1" fill="#00ffff"/><rect x="22" y="22" width="2" height="1" fill="#0000ff"/><rect x="24" y="22" width="1" height="1" fill="#000000"/><rect x="20" y="23" width="2" height="1" fill="#0000ff"/><rect x="22" y="23" width="1" height="1" fill="#00ffff"/><rect x="23" y="23" width="1" height="1" fill="#0000ff"/><rect x="24" y="23" width="1" height="1" fill="#000000"/><rect x="21" y="24" width="3" height="1" fill="#000000"/></svg>

<!-- list -->
<div id="list"></div>
<div class="hdr" style="left:2px;width:120px"><div class="t" style="left:6px">Name</div></div>
<div class="hdr" style="left:122px;width:120px"><div class="t" style="left:6px">In Folder</div></div>
<div class="hdr" style="left:242px;width:48px"><div class="t" style="left:-50px;width:93px;text-align:right;transform-origin:100% 0">Size</div></div>
<div class="hdr" style="left:290px;width:120px"><div class="t" style="left:7px">Type</div></div>
<div class="hdr" style="left:410px;width:180px"><div class="t" style="left:6px">Modified</div></div>
<div class="hdr" style="left:590px;width:48px"></div>
<div id="rows">
<div class="row" style="top:0px"><svg class="ico" style="left:2px;top:0px" width="16" height="16" viewBox="0 0 16 16" shape-rendering="crispEdges"><rect x="0" y="1" width="15" height="1" fill="#000080"/><rect x="0" y="2" width="1" height="1" fill="#000080"/><rect x="1" y="2" width="1" height="1" fill="#ffffff"/><rect x="2" y="2" width="1" height="1" fill="#000080"/><rect x="3" y="2" width="1" height="1" fill="#ffffff"/><rect x="4" y="2" width="1" height="1" fill="#000080"/><rect x="5" y="2" width="1" height="1" fill="#ffffff"/><rect x="6" y="2" width="1" height="1" fill="#000080"/><rect x="7" y="2" width="1" height="1" fill="#ffffff"/><rect x="8" y="2" width="1" height="1" fill="#000080"/><rect x="9" y="2" width="1" height="1" fill="#ffffff"/><rect x="10" y="2" width="1" height="1" fill="#000080"/><rect x="11" y="2" width="1" height="1" fill="#ffffff"/><rect x="12" y="2" width="1" height="1" fill="#000080"/><rect x="13" y="2" width="1" height="1" fill="#ffffff"/><rect x="14" y="2" width="1" height="1" fill="#000080"/><rect x="0" y="3" width="9" height="1" fill="#000080"/><rect x="9" y="3" width="1" height="1" fill="#000000"/><rect x="10" y="3" width="1" height="1" fill="#000080"/><rect x="11" y="3" width="1" height="1" fill="#000000"/><rect x="12" y="3" width="1" height="1" fill="#000080"/><rect x="13" y="3" width="1" height="1" fill="#000000"/><rect x="14" y="3" width="1" height="1" fill="#000080"/><rect x="0" y="4" width="2" height="1" fill="#000080"/><rect x="2" y="4" width="1" height="1" fill="#c0c0c0"/><rect x="3" y="4" width="1" height="1" fill="#000080"/><rect x="4" y="4" width="1" height="1" fill="#c0c0c0"/><rect x="5" y="4" width="1" height="1" fill="#000080"/><rect x="6" y="4" width="1" height="1" fill="#c0c0c0"/><rect x="7" y="4" width="1" height="1" fill="#000080"/><rect x="8" y="4" width="1" height="1" fill="#c0c0c0"/><rect x="9" y="4" width="1" height="1" fill="#000080"/><rect x="10" y="4" width="1" height="1" fill="#c0c0c0"/><rect x="11" y="4" width="1" height="1" fill="#000080"/><rect x="12" y="4" width="1" height="1" fill="#c0c0c0"/><rect x="13" y="4" width="1" height="1" fill="#000080"/><rect x="14" y="4" width="1" height="1" fill="#c0c0c0"/><rect x="0" y="5" width="1" height="1" fill="#000080"/><rect x="1" y="5" width="1" height="1" fill="#ffffff"/><rect x="2" y="5" width="1" height="1" fill="#000080"/><rect x="3" y="5" width="1" height="1" fill="#ffffff"/><rect x="4" y="5" width="1" height="1" fill="#000080"/><rect x="5" y="5" width="1" height="1" fill="#ffffff"/><rect x="6" y="5" width="1" height="1" fill="#000080"/><rect x="7" y="5" width="1" height="1" fill="#ffffff"/><rect x="8" y="5" width="1" height="1" fill="#000080"/><rect x="9" y="5" width="1" height="1" fill="#ffffff"/><rect x="10" y="5" width="1" height="1" fill="#000080"/><rect x="11" y="5" width="1" height="1" fill="#ffffff"/><rect x="12" y="5" width="1" height="1" fill="#000080"/><rect x="13" y="5" width="1" height="1" fill="#ffffff"/><rect x="14" y="5" width="1" height="1" fill="#000080"/><rect x="0" y="6" width="2" height="1" fill="#000080"/><rect x="2" y="6" width="1" height="1" fill="#ffffff"/><rect x="3" y="6" width="1" height="1" fill="#000080"/><rect x="4" y="6" width="1" height="1" fill="#ffffff"/><rect x="5" y="6" width="1" height="1" fill="#000080"/><rect x="6" y="6" width="1" height="1" fill="#ffffff"/><rect x="7" y="6" width="1" height="1" fill="#000080"/><rect x="8" y="6" width="1" height="1" fill="#000000"/><rect x="9" y="6" width="1" height="1" fill="#000080"/><rect x="10" y="6" width="1" height="1" fill="#ffffff"/><rect x="11" y="6" width="1" height="1" fill="#000080"/><rect x="12" y="6" width="1" height="1" fill="#ffffff"/><rect x="13" y="6" width="2" height="1" fill="#000080"/><rect x="0" y="7" width="1" height="1" fill="#000080"/><rect x="1" y="7" width="1" height="1" fill="#ffffff"/><rect x="2" y="7" width="1" height="1" fill="#000080"/><rect x="3" y="7" width="1" height="1" fill="#ffffff"/><rect x="4" y="7" width="1" height="1" fill="#000080"/><rect x="5" y="7" width="1" height="1" fill="#ffff00"/><rect x="6" y="7" width="3" height="1" fill="#000080"/><rect x="9" y="7" width="1" height="1" fill="#000000"/><rect x="10" y="7" width="1" height="1" fill="#000080"/><rect x="11" y="7" width="1" height="1" fill="#ffffff"/><rect x="12" y="7" width="1" height="1" fill="#000080"/><rect x="13" y="7" width="1" height="1" fill="#ffffff"/><rect x="14" y="7" width="1" height="1" fill="#000080"/><rect x="0" y="8" width="2" height="1" fill="#000080"/><rect x="2" y="8" width="1" height="1" fill="#ffffff"/><rect x="3" y="8" width="1" height="1" fill="#000080"/><rect x="4" y="8" width="1" height="1" fill="#ffffff"/><rect x="5" y="8" width="1" height="1" fill="#000080"/><rect x="6" y="8" width="1" height="1" fill="#ffff00"/><rect x="7" y="8" width="3" height="1" fill="#000080"/><rect x="10" y="8" width="1" height="1" fill="#000000"/><rect x="11" y="8" width="1" height="1" fill="#000080"/><rect x="12" y="8" width="1" height="1" fill="#ffffff"/><rect x="13" y="8" width="2" height="1" fill="#000080"/><rect x="0" y="9" width="1" height="1" fill="#000080"/><rect x="1" y="9" width="1" height="1" fill="#ffffff"/><rect x="2" y="9" width="1" height="1" fill="#000080"/><rect x="3" y="9" width="1" height="1" fill="#ffffff"/><rect x="4" y="9" width="1" height="1" fill="#000080"/><rect x="5" y="9" width="1" height="1" fill="#ffff00"/><rect x="6" y="9" width="3" height="1" fill="#000080"/><rect x="9" y="9" width="1" height="1" fill="#000000"/><rect x="10" y="9" width="1" height="1" fill="#000080"/><rect x="11" y="9" width="1" height="1" fill="#ffffff"/><rect x="12" y="9" width="1" height="1" fill="#000080"/><rect x="13" y="9" width="1" height="1" fill="#ffffff"/><rect x="14" y="9" width="1" height="1" fill="#000080"/><rect x="0" y="10" width="2" height="1" fill="#000080"/><rect x="2" y="10" width="1" height="1" fill="#ffffff"/><rect x="3" y="10" width="1" height="1" fill="#000080"/><rect x="4" y="10" width="1" height="1" fill="#ffffff"/><rect x="5" y="10" width="1" height="1" fill="#000080"/><rect x="6" y="10" width="1" height="1" fill="#ffffff"/><rect x="7" y="10" width="1" height="1" fill="#000080"/><rect x="8" y="10" width="1" height="1" fill="#000000"/><rect x="9" y="10" width="1" height="1" fill="#000080"/><rect x="10" y="10" width="1" height="1" fill="#ffffff"/><rect x="11" y="10" width="1" height="1" fill="#000080"/><rect x="12" y="10" width="1" height="1" fill="#ffffff"/><rect x="13" y="10" width="2" height="1" fill="#000080"/><rect x="0" y="11" width="1" height="1" fill="#000080"/><rect x="1" y="11" width="1" height="1" fill="#ffffff"/><rect x="2" y="11" width="1" height="1" fill="#000080"/><rect x="3" y="11" width="1" height="1" fill="#ffffff"/><rect x="4" y="11" width="1" height="1" fill="#000080"/><rect x="5" y="11" width="1" height="1" fill="#ffffff"/><rect x="6" y="11" width="1" height="1" fill="#000080"/><rect x="7" y="11" width="1" height="1" fill="#ffffff"/><rect x="8" y="11" width="1" height="1" fill="#000080"/><rect x="9" y="11" width="1" height="1" fill="#ffffff"/><rect x="10" y="11" width="1" height="1" fill="#000080"/><rect x="11" y="11" width="1" height="1" fill="#ffffff"/><rect x="12" y="11" width="1" height="1" fill="#000080"/><rect x="13" y="11" width="1" height="1" fill="#ffffff"/><rect x="14" y="11" width="1" height="1" fill="#000080"/><rect x="0" y="12" width="2" height="1" fill="#000080"/><rect x="2" y="12" width="1" height="1" fill="#ffffff"/><rect x="3" y="12" width="1" height="1" fill="#000080"/><rect x="4" y="12" width="1" height="1" fill="#ffffff"/><rect x="5" y="12" width="1" height="1" fill="#000080"/><rect x="6" y="12" width="1" height="1" fill="#ffffff"/><rect x="7" y="12" width="1" height="1" fill="#000080"/><rect x="8" y="12" width="1" height="1" fill="#ffffff"/><rect x="9" y="12" width="1" height="1" fill="#000080"/><rect x="10" y="12" width="1" height="1" fill="#ffffff"/><rect x="11" y="12" width="1" height="1" fill="#000080"/><rect x="12" y="12" width="1" height="1" fill="#ffffff"/><rect x="13" y="12" width="2" height="1" fill="#000080"/><rect x="0" y="13" width="1" height="1" fill="#000080"/><rect x="1" y="13" width="1" height="1" fill="#c0c0c0"/><rect x="2" y="13" width="1" height="1" fill="#000080"/><rect x="3" y="13" width="1" height="1" fill="#c0c0c0"/><rect x="4" y="13" width="1" height="1" fill="#000080"/><rect x="5" y="13" width="1" height="1" fill="#c0c0c0"/><rect x="6" y="13" width="1" height="1" fill="#000080"/><rect x="7" y="13" width="1" height="1" fill="#c0c0c0"/><rect x="8" y="13" width="1" height="1" fill="#000080"/><rect x="9" y="13" width="1" height="1" fill="#c0c0c0"/><rect x="10" y="13" width="1" height="1" fill="#000080"/><rect x="11" y="13" width="1" height="1" fill="#c0c0c0"/><rect x="12" y="13" width="1" height="1" fill="#000080"/><rect x="13" y="13" width="1" height="1" fill="#c0c0c0"/><rect x="14" y="13" width="1" height="1" fill="#000080"/><rect x="0" y="14" width="1" height="1" fill="#000080"/><rect x="1" y="14" width="1" height="1" fill="#000000"/><rect x="2" y="14" width="1" height="1" fill="#000080"/><rect x="3" y="14" width="1" height="1" fill="#000000"/><rect x="4" y="14" width="1" height="1" fill="#000080"/><rect x="5" y="14" width="1" height="1" fill="#000000"/><rect x="6" y="14" width="1" height="1" fill="#000080"/><rect x="7" y="14" width="1" height="1" fill="#000000"/><rect x="8" y="14" width="1" height="1" fill="#000080"/><rect x="9" y="14" width="1" height="1" fill="#000000"/><rect x="10" y="14" width="1" height="1" fill="#000080"/><rect x="11" y="14" width="1" height="1" fill="#000000"/><rect x="12" y="14" width="1" height="1" fill="#000080"/><rect x="13" y="14" width="1" height="1" fill="#000000"/><rect x="14" y="14" width="1" height="1" fill="#000080"/></svg><div class="selbox"></div><div class="t nm sel">Autoexec.bat</div><div class="t c2">C:\</div><div class="t sz">0KB</div><div class="t c4">MS-DOS Batch File</div><div class="t n c5">12/07/99 20:05</div></div>
<div class="row" style="top:17px"><svg class="ico" style="left:2px;top:0px" width="16" height="16" viewBox="0 0 16 16" shape-rendering="crispEdges"><rect x="2" y="2" width="11" height="12" fill="#ffffff"/><rect x="1" y="2" width="1" height="12" fill="#808080"/><rect x="2" y="13" width="11" height="1" fill="#808080"/><rect x="13" y="2" width="1" height="13" fill="#000000"/><rect x="2" y="14" width="12" height="1" fill="#000000"/><rect x="3" y="0" width="1" height="1" fill="#000000"/><rect x="2" y="1" width="1" height="1" fill="#000000"/><rect x="3" y="2" width="1" height="1" fill="#000000"/><rect x="5" y="0" width="1" height="1" fill="#000000"/><rect x="4" y="1" width="1" height="1" fill="#000000"/><rect x="5" y="2" width="1" height="1" fill="#000000"/><rect x="7" y="0" width="1" height="1" fill="#000000"/><rect x="6" y="1" width="1" height="1" fill="#000000"/><rect x="7" y="2" width="1" height="1" fill="#000000"/><rect x="9" y="0" width="1" height="1" fill="#000000"/><rect x="8" y="1" width="1" height="1" fill="#000000"/><rect x="9" y="2" width="1" height="1" fill="#000000"/><rect x="11" y="0" width="1" height="1" fill="#000000"/><rect x="10" y="1" width="1" height="1" fill="#000000"/><rect x="11" y="2" width="1" height="1" fill="#000000"/><rect x="12" y="1" width="1" height="1" fill="#000000"/><rect x="4" y="5" width="3" height="1" fill="#000000"/><rect x="8" y="5" width="3" height="1" fill="#000000"/><rect x="4" y="7" width="6" height="1" fill="#000000"/><rect x="4" y="9" width="2" height="1" fill="#000000"/><rect x="4" y="11" width="2" height="1" fill="#000000"/><rect x="7" y="8" width="5" height="5" fill="#000000"/><rect x="6" y="9" width="7" height="3" fill="#000000"/><rect x="8" y="7" width="3" height="7" fill="#000000"/><rect x="8" y="9" width="3" height="3" fill="#ffff00"/><rect x="7" y="10" width="5" height="1" fill="#ffff00"/><rect x="9" y="8" width="1" height="5" fill="#ffff00"/><rect x="9" y="10" width="1" height="1" fill="#000000"/></svg><div class="t nm">boot.ini</div><div class="t c2">C:\</div><div class="t sz">1KB</div><div class="t c4">Configuration Settings</div><div class="t n c5">12/07/99 20:01</div></div>
<div class="row" style="top:34px"><svg class="ico" style="left:2px;top:0px" width="16" height="16" viewBox="0 0 16 16" shape-rendering="crispEdges"><rect x="1" y="3" width="13" height="10" fill="#ffff00"/><rect x="2" y="1" width="5" height="3" fill="#ffff00"/><path d="M3 1h1v1h-1zM5 1h1v1h-1zM2 2h1v1h-1zM4 2h1v1h-1zM6 2h1v1h-1zM1 3h1v1h-1zM3 3h1v1h-1zM5 3h1v1h-1zM7 3h1v1h-1zM9 3h1v1h-1zM11 3h1v1h-1zM13 3h1v1h-1zM2 4h1v1h-1zM4 4h1v1h-1zM6 4h1v1h-1zM8 4h1v1h-1zM10 4h1v1h-1zM12 4h1v1h-1zM1 5h1v1h-1zM3 5h1v1h-1zM5 5h1v1h-1zM7 5h1v1h-1zM9 5h1v1h-1zM11 5h1v1h-1zM13 5h1v1h-1zM2 6h1v1h-1zM4 6h1v1h-1zM6 6h1v1h-1zM8 6h1v1h-1zM10 6h1v1h-1zM12 6h1v1h-1zM1 7h1v1h-1zM3 7h1v1h-1zM5 7h1v1h-1zM7 7h1v1h-1zM9 7h1v1h-1zM11 7h1v1h-1zM13 7h1v1h-1zM2 8h1v1h-1zM4 8h1v1h-1zM6 8h1v1h-1zM8 8h1v1h-1zM10 8h1v1h-1zM12 8h1v1h-1zM1 9h1v1h-1zM3 9h1v1h-1zM5 9h1v1h-1zM7 9h1v1h-1zM9 9h1v1h-1zM11 9h1v1h-1zM13 9h1v1h-1zM2 10h1v1h-1zM4 10h1v1h-1zM6 10h1v1h-1zM8 10h1v1h-1zM10 10h1v1h-1zM12 10h1v1h-1zM1 11h1v1h-1zM3 11h1v1h-1zM5 11h1v1h-1zM7 11h1v1h-1zM9 11h1v1h-1zM11 11h1v1h-1zM13 11h1v1h-1zM2 12h1v1h-1zM4 12h1v1h-1zM6 12h1v1h-1zM8 12h1v1h-1zM10 12h1v1h-1zM12 12h1v1h-1z" fill="#c0c0c0"/><rect x="2" y="1" width="5" height="1" fill="#808080"/><rect x="1" y="2" width="1" height="1" fill="#808080"/><rect x="7" y="2" width="1" height="1" fill="#808080"/><rect x="0" y="3" width="1" height="10" fill="#808080"/><rect x="8" y="3" width="6" height="1" fill="#808080"/><rect x="1" y="12" width="13" height="1" fill="#808080"/><rect x="1" y="3" width="1" height="9" fill="#ffffff"/><rect x="2" y="4" width="12" height="1" fill="#ffffff"/><rect x="14" y="3" width="1" height="11" fill="#000000"/><rect x="1" y="13" width="14" height="1" fill="#000000"/></svg><div class="t nm">Program Files</div><div class="t c2">C:\</div><div class="t c4">File Folder</div><div class="t n c5">12/07/99 10:42</div></div>
<div class="row" style="top:51px"><svg class="ico" style="left:2px;top:0px" width="16" height="16" viewBox="0 0 16 16" shape-rendering="crispEdges"><rect x="1" y="2" width="11" height="12" fill="#ffffff"/><rect x="0" y="2" width="1" height="12" fill="#808080"/><rect x="1" y="13" width="11" height="1" fill="#808080"/><rect x="12" y="2" width="1" height="13" fill="#000000"/><rect x="1" y="14" width="12" height="1" fill="#000000"/><rect x="2" y="0" width="1" height="1" fill="#000000"/><rect x="1" y="1" width="1" height="1" fill="#000000"/><rect x="2" y="2" width="1" height="1" fill="#000000"/><rect x="4" y="0" width="1" height="1" fill="#000000"/><rect x="3" y="1" width="1" height="1" fill="#000000"/><rect x="4" y="2" width="1" height="1" fill="#000000"/><rect x="6" y="0" width="1" height="1" fill="#000000"/><rect x="5" y="1" width="1" height="1" fill="#000000"/><rect x="6" y="2" width="1" height="1" fill="#000000"/><rect x="8" y="0" width="1" height="1" fill="#000000"/><rect x="7" y="1" width="1" height="1" fill="#000000"/><rect x="8" y="2" width="1" height="1" fill="#000000"/><rect x="10" y="0" width="1" height="1" fill="#000000"/><rect x="9" y="1" width="1" height="1" fill="#000000"/><rect x="10" y="2" width="1" height="1" fill="#000000"/><rect x="11" y="1" width="1" height="1" fill="#000000"/><rect x="3" y="5" width="3" height="1" fill="#000000"/><rect x="7" y="5" width="3" height="1" fill="#000000"/><rect x="3" y="7" width="7" height="1" fill="#000000"/><rect x="3" y="9" width="7" height="1" fill="#000000"/><rect x="3" y="11" width="7" height="1" fill="#000000"/></svg><div class="t nm">startcli.log</div><div class="t c2">C:\</div><div class="t sz">1KB</div><div class="t c4">Text Document</div><div class="t n c5">12/07/99 10:20</div></div>
<div class="row" style="top:68px"><svg class="ico" style="left:2px;top:0px" width="16" height="16" viewBox="0 0 16 16" shape-rendering="crispEdges"><rect x="1" y="3" width="13" height="10" fill="#ffff00"/><rect x="2" y="1" width="5" height="3" fill="#ffff00"/><path d="M3 1h1v1h-1zM5 1h1v1h-1zM2 2h1v1h-1zM4 2h1v1h-1zM6 2h1v1h-1zM1 3h1v1h-1zM3 3h1v1h-1zM5 3h1v1h-1zM7 3h1v1h-1zM9 3h1v1h-1zM11 3h1v1h-1zM13 3h1v1h-1zM2 4h1v1h-1zM4 4h1v1h-1zM6 4h1v1h-1zM8 4h1v1h-1zM10 4h1v1h-1zM12 4h1v1h-1zM1 5h1v1h-1zM3 5h1v1h-1zM5 5h1v1h-1zM7 5h1v1h-1zM9 5h1v1h-1zM11 5h1v1h-1zM13 5h1v1h-1zM2 6h1v1h-1zM4 6h1v1h-1zM6 6h1v1h-1zM8 6h1v1h-1zM10 6h1v1h-1zM12 6h1v1h-1zM1 7h1v1h-1zM3 7h1v1h-1zM5 7h1v1h-1zM7 7h1v1h-1zM9 7h1v1h-1zM11 7h1v1h-1zM13 7h1v1h-1zM2 8h1v1h-1zM4 8h1v1h-1zM6 8h1v1h-1zM8 8h1v1h-1zM10 8h1v1h-1zM12 8h1v1h-1zM1 9h1v1h-1zM3 9h1v1h-1zM5 9h1v1h-1zM7 9h1v1h-1zM9 9h1v1h-1zM11 9h1v1h-1zM13 9h1v1h-1zM2 10h1v1h-1zM4 10h1v1h-1zM6 10h1v1h-1zM8 10h1v1h-1zM10 10h1v1h-1zM12 10h1v1h-1zM1 11h1v1h-1zM3 11h1v1h-1zM5 11h1v1h-1zM7 11h1v1h-1zM9 11h1v1h-1zM11 11h1v1h-1zM13 11h1v1h-1zM2 12h1v1h-1zM4 12h1v1h-1zM6 12h1v1h-1zM8 12h1v1h-1zM10 12h1v1h-1zM12 12h1v1h-1z" fill="#c0c0c0"/><rect x="2" y="1" width="5" height="1" fill="#808080"/><rect x="1" y="2" width="1" height="1" fill="#808080"/><rect x="7" y="2" width="1" height="1" fill="#808080"/><rect x="0" y="3" width="1" height="10" fill="#808080"/><rect x="8" y="3" width="6" height="1" fill="#808080"/><rect x="1" y="12" width="13" height="1" fill="#808080"/><rect x="1" y="3" width="1" height="9" fill="#ffffff"/><rect x="2" y="4" width="12" height="1" fill="#ffffff"/><rect x="14" y="3" width="1" height="11" fill="#000000"/><rect x="1" y="13" width="14" height="1" fill="#000000"/></svg><div class="t nm">Temp</div><div class="t c2">C:\</div><div class="t c4">File Folder</div><div class="t n c5">13/07/99 12:24</div></div>
<div class="row" style="top:85px"><svg class="ico" style="left:2px;top:0px" width="16" height="16" viewBox="0 0 16 16" shape-rendering="crispEdges"><rect x="1" y="3" width="13" height="10" fill="#ffff00"/><rect x="2" y="1" width="5" height="3" fill="#ffff00"/><path d="M3 1h1v1h-1zM5 1h1v1h-1zM2 2h1v1h-1zM4 2h1v1h-1zM6 2h1v1h-1zM1 3h1v1h-1zM3 3h1v1h-1zM5 3h1v1h-1zM7 3h1v1h-1zM9 3h1v1h-1zM11 3h1v1h-1zM13 3h1v1h-1zM2 4h1v1h-1zM4 4h1v1h-1zM6 4h1v1h-1zM8 4h1v1h-1zM10 4h1v1h-1zM12 4h1v1h-1zM1 5h1v1h-1zM3 5h1v1h-1zM5 5h1v1h-1zM7 5h1v1h-1zM9 5h1v1h-1zM11 5h1v1h-1zM13 5h1v1h-1zM2 6h1v1h-1zM4 6h1v1h-1zM6 6h1v1h-1zM8 6h1v1h-1zM10 6h1v1h-1zM12 6h1v1h-1zM1 7h1v1h-1zM3 7h1v1h-1zM5 7h1v1h-1zM7 7h1v1h-1zM9 7h1v1h-1zM11 7h1v1h-1zM13 7h1v1h-1zM2 8h1v1h-1zM4 8h1v1h-1zM6 8h1v1h-1zM8 8h1v1h-1zM10 8h1v1h-1zM12 8h1v1h-1zM1 9h1v1h-1zM3 9h1v1h-1zM5 9h1v1h-1zM7 9h1v1h-1zM9 9h1v1h-1zM11 9h1v1h-1zM13 9h1v1h-1zM2 10h1v1h-1zM4 10h1v1h-1zM6 10h1v1h-1zM8 10h1v1h-1zM10 10h1v1h-1zM12 10h1v1h-1zM1 11h1v1h-1zM3 11h1v1h-1zM5 11h1v1h-1zM7 11h1v1h-1zM9 11h1v1h-1zM11 11h1v1h-1zM13 11h1v1h-1zM2 12h1v1h-1zM4 12h1v1h-1zM6 12h1v1h-1zM8 12h1v1h-1zM10 12h1v1h-1zM12 12h1v1h-1z" fill="#c0c0c0"/><rect x="2" y="1" width="5" height="1" fill="#808080"/><rect x="1" y="2" width="1" height="1" fill="#808080"/><rect x="7" y="2" width="1" height="1" fill="#808080"/><rect x="0" y="3" width="1" height="10" fill="#808080"/><rect x="8" y="3" width="6" height="1" fill="#808080"/><rect x="1" y="12" width="13" height="1" fill="#808080"/><rect x="1" y="3" width="1" height="9" fill="#ffffff"/><rect x="2" y="4" width="12" height="1" fill="#ffffff"/><rect x="14" y="3" width="1" height="11" fill="#000000"/><rect x="1" y="13" width="14" height="1" fill="#000000"/></svg><div class="t nm">Winnt</div><div class="t c2">C:\</div><div class="t c4">File Folder</div><div class="t n c5">12/07/99 10:53</div></div>
<div class="row" style="top:102px"><svg class="ico" style="left:2px;top:0px" width="16" height="16" viewBox="0 0 16 16" shape-rendering="crispEdges"><rect x="1" y="3" width="13" height="10" fill="#ffff00"/><rect x="2" y="1" width="5" height="3" fill="#ffff00"/><path d="M3 1h1v1h-1zM5 1h1v1h-1zM2 2h1v1h-1zM4 2h1v1h-1zM6 2h1v1h-1zM1 3h1v1h-1zM3 3h1v1h-1zM5 3h1v1h-1zM7 3h1v1h-1zM9 3h1v1h-1zM11 3h1v1h-1zM13 3h1v1h-1zM2 4h1v1h-1zM4 4h1v1h-1zM6 4h1v1h-1zM8 4h1v1h-1zM10 4h1v1h-1zM12 4h1v1h-1zM1 5h1v1h-1zM3 5h1v1h-1zM5 5h1v1h-1zM7 5h1v1h-1zM9 5h1v1h-1zM11 5h1v1h-1zM13 5h1v1h-1zM2 6h1v1h-1zM4 6h1v1h-1zM6 6h1v1h-1zM8 6h1v1h-1zM10 6h1v1h-1zM12 6h1v1h-1zM1 7h1v1h-1zM3 7h1v1h-1zM5 7h1v1h-1zM7 7h1v1h-1zM9 7h1v1h-1zM11 7h1v1h-1zM13 7h1v1h-1zM2 8h1v1h-1zM4 8h1v1h-1zM6 8h1v1h-1zM8 8h1v1h-1zM10 8h1v1h-1zM12 8h1v1h-1zM1 9h1v1h-1zM3 9h1v1h-1zM5 9h1v1h-1zM7 9h1v1h-1zM9 9h1v1h-1zM11 9h1v1h-1zM13 9h1v1h-1zM2 10h1v1h-1zM4 10h1v1h-1zM6 10h1v1h-1zM8 10h1v1h-1zM10 10h1v1h-1zM12 10h1v1h-1zM1 11h1v1h-1zM3 11h1v1h-1zM5 11h1v1h-1zM7 11h1v1h-1zM9 11h1v1h-1zM11 11h1v1h-1zM13 11h1v1h-1zM2 12h1v1h-1zM4 12h1v1h-1zM6 12h1v1h-1zM8 12h1v1h-1zM10 12h1v1h-1zM12 12h1v1h-1z" fill="#c0c0c0"/><rect x="2" y="1" width="5" height="1" fill="#808080"/><rect x="1" y="2" width="1" height="1" fill="#808080"/><rect x="7" y="2" width="1" height="1" fill="#808080"/><rect x="0" y="3" width="1" height="10" fill="#808080"/><rect x="8" y="3" width="6" height="1" fill="#808080"/><rect x="1" y="12" width="13" height="1" fill="#808080"/><rect x="1" y="3" width="1" height="9" fill="#ffffff"/><rect x="2" y="4" width="12" height="1" fill="#ffffff"/><rect x="14" y="3" width="1" height="11" fill="#000000"/><rect x="1" y="13" width="14" height="1" fill="#000000"/></svg><div class="t nm">Common Files</div><div class="t c2">C:\Program Files</div><div class="t c4">File Folder</div><div class="t n c5">12/07/99 10:41</div></div>
<div class="row" style="top:119px"><svg class="ico" style="left:2px;top:0px" width="16" height="16" viewBox="0 0 16 16" shape-rendering="crispEdges"><rect x="1" y="3" width="13" height="10" fill="#ffff00"/><rect x="2" y="1" width="5" height="3" fill="#ffff00"/><path d="M3 1h1v1h-1zM5 1h1v1h-1zM2 2h1v1h-1zM4 2h1v1h-1zM6 2h1v1h-1zM1 3h1v1h-1zM3 3h1v1h-1zM5 3h1v1h-1zM7 3h1v1h-1zM9 3h1v1h-1zM11 3h1v1h-1zM13 3h1v1h-1zM2 4h1v1h-1zM4 4h1v1h-1zM6 4h1v1h-1zM8 4h1v1h-1zM10 4h1v1h-1zM12 4h1v1h-1zM1 5h1v1h-1zM3 5h1v1h-1zM5 5h1v1h-1zM7 5h1v1h-1zM9 5h1v1h-1zM11 5h1v1h-1zM13 5h1v1h-1zM2 6h1v1h-1zM4 6h1v1h-1zM6 6h1v1h-1zM8 6h1v1h-1zM10 6h1v1h-1zM12 6h1v1h-1zM1 7h1v1h-1zM3 7h1v1h-1zM5 7h1v1h-1zM7 7h1v1h-1zM9 7h1v1h-1zM11 7h1v1h-1zM13 7h1v1h-1zM2 8h1v1h-1zM4 8h1v1h-1zM6 8h1v1h-1zM8 8h1v1h-1zM10 8h1v1h-1zM12 8h1v1h-1zM1 9h1v1h-1zM3 9h1v1h-1zM5 9h1v1h-1zM7 9h1v1h-1zM9 9h1v1h-1zM11 9h1v1h-1zM13 9h1v1h-1zM2 10h1v1h-1zM4 10h1v1h-1zM6 10h1v1h-1zM8 10h1v1h-1zM10 10h1v1h-1zM12 10h1v1h-1zM1 11h1v1h-1zM3 11h1v1h-1zM5 11h1v1h-1zM7 11h1v1h-1zM9 11h1v1h-1zM11 11h1v1h-1zM13 11h1v1h-1zM2 12h1v1h-1zM4 12h1v1h-1zM6 12h1v1h-1zM8 12h1v1h-1zM10 12h1v1h-1zM12 12h1v1h-1z" fill="#c0c0c0"/><rect x="2" y="1" width="5" height="1" fill="#808080"/><rect x="1" y="2" width="1" height="1" fill="#808080"/><rect x="7" y="2" width="1" height="1" fill="#808080"/><rect x="0" y="3" width="1" height="10" fill="#808080"/><rect x="8" y="3" width="6" height="1" fill="#808080"/><rect x="1" y="12" width="13" height="1" fill="#808080"/><rect x="1" y="3" width="1" height="9" fill="#ffffff"/><rect x="2" y="4" width="12" height="1" fill="#ffffff"/><rect x="14" y="3" width="1" height="11" fill="#000000"/><rect x="1" y="13" width="14" height="1" fill="#000000"/></svg><div class="t nm">Microsoft Office</div><div class="t c2">C:\Program Files</div><div class="t c4">File Folder</div><div class="t n c5">12/07/99 10:42</div></div>
<div class="row" style="top:136px"><svg class="ico" style="left:2px;top:0px" width="16" height="16" viewBox="0 0 16 16" shape-rendering="crispEdges"><rect x="1" y="3" width="13" height="10" fill="#ffff00"/><rect x="2" y="1" width="5" height="3" fill="#ffff00"/><path d="M3 1h1v1h-1zM5 1h1v1h-1zM2 2h1v1h-1zM4 2h1v1h-1zM6 2h1v1h-1zM1 3h1v1h-1zM3 3h1v1h-1zM5 3h1v1h-1zM7 3h1v1h-1zM9 3h1v1h-1zM11 3h1v1h-1zM13 3h1v1h-1zM2 4h1v1h-1zM4 4h1v1h-1zM6 4h1v1h-1zM8 4h1v1h-1zM10 4h1v1h-1zM12 4h1v1h-1zM1 5h1v1h-1zM3 5h1v1h-1zM5 5h1v1h-1zM7 5h1v1h-1zM9 5h1v1h-1zM11 5h1v1h-1zM13 5h1v1h-1zM2 6h1v1h-1zM4 6h1v1h-1zM6 6h1v1h-1zM8 6h1v1h-1zM10 6h1v1h-1zM12 6h1v1h-1zM1 7h1v1h-1zM3 7h1v1h-1zM5 7h1v1h-1zM7 7h1v1h-1zM9 7h1v1h-1zM11 7h1v1h-1zM13 7h1v1h-1zM2 8h1v1h-1zM4 8h1v1h-1zM6 8h1v1h-1zM8 8h1v1h-1zM10 8h1v1h-1zM12 8h1v1h-1zM1 9h1v1h-1zM3 9h1v1h-1zM5 9h1v1h-1zM7 9h1v1h-1zM9 9h1v1h-1zM11 9h1v1h-1zM13 9h1v1h-1zM2 10h1v1h-1zM4 10h1v1h-1zM6 10h1v1h-1zM8 10h1v1h-1zM10 10h1v1h-1zM12 10h1v1h-1zM1 11h1v1h-1zM3 11h1v1h-1zM5 11h1v1h-1zM7 11h1v1h-1zM9 11h1v1h-1zM11 11h1v1h-1zM13 11h1v1h-1zM2 12h1v1h-1zM4 12h1v1h-1zM6 12h1v1h-1zM8 12h1v1h-1zM10 12h1v1h-1zM12 12h1v1h-1z" fill="#c0c0c0"/><rect x="2" y="1" width="5" height="1" fill="#808080"/><rect x="1" y="2" width="1" height="1" fill="#808080"/><rect x="7" y="2" width="1" height="1" fill="#808080"/><rect x="0" y="3" width="1" height="10" fill="#808080"/><rect x="8" y="3" width="6" height="1" fill="#808080"/><rect x="1" y="12" width="13" height="1" fill="#808080"/><rect x="1" y="3" width="1" height="9" fill="#ffffff"/><rect x="2" y="4" width="12" height="1" fill="#ffffff"/><rect x="14" y="3" width="1" height="11" fill="#000000"/><rect x="1" y="13" width="14" height="1" fill="#000000"/></svg><div class="t nm">Plus!</div><div class="t c2">C:\Program Files</div><div class="t c4">File Folder</div><div class="t n c5">12/07/99 10:07</div></div>
<div class="row" style="top:153px"><svg class="ico" style="left:2px;top:0px" width="16" height="16" viewBox="0 0 16 16" shape-rendering="crispEdges"><rect x="1" y="3" width="13" height="10" fill="#ffff00"/><rect x="2" y="1" width="5" height="3" fill="#ffff00"/><path d="M3 1h1v1h-1zM5 1h1v1h-1zM2 2h1v1h-1zM4 2h1v1h-1zM6 2h1v1h-1zM1 3h1v1h-1zM3 3h1v1h-1zM5 3h1v1h-1zM7 3h1v1h-1zM9 3h1v1h-1zM11 3h1v1h-1zM13 3h1v1h-1zM2 4h1v1h-1zM4 4h1v1h-1zM6 4h1v1h-1zM8 4h1v1h-1zM10 4h1v1h-1zM12 4h1v1h-1zM1 5h1v1h-1zM3 5h1v1h-1zM5 5h1v1h-1zM7 5h1v1h-1zM9 5h1v1h-1zM11 5h1v1h-1zM13 5h1v1h-1zM2 6h1v1h-1zM4 6h1v1h-1zM6 6h1v1h-1zM8 6h1v1h-1zM10 6h1v1h-1zM12 6h1v1h-1zM1 7h1v1h-1zM3 7h1v1h-1zM5 7h1v1h-1zM7 7h1v1h-1zM9 7h1v1h-1zM11 7h1v1h-1zM13 7h1v1h-1zM2 8h1v1h-1zM4 8h1v1h-1zM6 8h1v1h-1zM8 8h1v1h-1zM10 8h1v1h-1zM12 8h1v1h-1zM1 9h1v1h-1zM3 9h1v1h-1zM5 9h1v1h-1zM7 9h1v1h-1zM9 9h1v1h-1zM11 9h1v1h-1zM13 9h1v1h-1zM2 10h1v1h-1zM4 10h1v1h-1zM6 10h1v1h-1zM8 10h1v1h-1zM10 10h1v1h-1zM12 10h1v1h-1zM1 11h1v1h-1zM3 11h1v1h-1zM5 11h1v1h-1zM7 11h1v1h-1zM9 11h1v1h-1zM11 11h1v1h-1zM13 11h1v1h-1zM2 12h1v1h-1zM4 12h1v1h-1zM6 12h1v1h-1zM8 12h1v1h-1zM10 12h1v1h-1zM12 12h1v1h-1z" fill="#c0c0c0"/><rect x="2" y="1" width="5" height="1" fill="#808080"/><rect x="1" y="2" width="1" height="1" fill="#808080"/><rect x="7" y="2" width="1" height="1" fill="#808080"/><rect x="0" y="3" width="1" height="10" fill="#808080"/><rect x="8" y="3" width="6" height="1" fill="#808080"/><rect x="1" y="12" width="13" height="1" fill="#808080"/><rect x="1" y="3" width="1" height="9" fill="#ffffff"/><rect x="2" y="4" width="12" height="1" fill="#ffffff"/><rect x="14" y="3" width="1" height="11" fill="#000000"/><rect x="1" y="13" width="14" height="1" fill="#000000"/></svg><div class="t nm">Windows Messaging</div><div class="t c2">C:\Program Files</div><div class="t c4">File Folder</div><div class="t n c5">12/07/99 10:40</div></div>
<div class="row" style="top:170px"><svg class="ico" style="left:2px;top:0px" width="16" height="16" viewBox="0 0 16 16" shape-rendering="crispEdges"><rect x="1" y="3" width="13" height="10" fill="#ffff00"/><rect x="2" y="1" width="5" height="3" fill="#ffff00"/><path d="M3 1h1v1h-1zM5 1h1v1h-1zM2 2h1v1h-1zM4 2h1v1h-1zM6 2h1v1h-1zM1 3h1v1h-1zM3 3h1v1h-1zM5 3h1v1h-1zM7 3h1v1h-1zM9 3h1v1h-1zM11 3h1v1h-1zM13 3h1v1h-1zM2 4h1v1h-1zM4 4h1v1h-1zM6 4h1v1h-1zM8 4h1v1h-1zM10 4h1v1h-1zM12 4h1v1h-1zM1 5h1v1h-1zM3 5h1v1h-1zM5 5h1v1h-1zM7 5h1v1h-1zM9 5h1v1h-1zM11 5h1v1h-1zM13 5h1v1h-1zM2 6h1v1h-1zM4 6h1v1h-1zM6 6h1v1h-1zM8 6h1v1h-1zM10 6h1v1h-1zM12 6h1v1h-1zM1 7h1v1h-1zM3 7h1v1h-1zM5 7h1v1h-1zM7 7h1v1h-1zM9 7h1v1h-1zM11 7h1v1h-1zM13 7h1v1h-1zM2 8h1v1h-1zM4 8h1v1h-1zM6 8h1v1h-1zM8 8h1v1h-1zM10 8h1v1h-1zM12 8h1v1h-1zM1 9h1v1h-1zM3 9h1v1h-1zM5 9h1v1h-1zM7 9h1v1h-1zM9 9h1v1h-1zM11 9h1v1h-1zM13 9h1v1h-1zM2 10h1v1h-1zM4 10h1v1h-1zM6 10h1v1h-1zM8 10h1v1h-1zM10 10h1v1h-1zM12 10h1v1h-1zM1 11h1v1h-1zM3 11h1v1h-1zM5 11h1v1h-1zM7 11h1v1h-1zM9 11h1v1h-1zM11 11h1v1h-1zM13 11h1v1h-1zM2 12h1v1h-1zM4 12h1v1h-1zM6 12h1v1h-1zM8 12h1v1h-1zM10 12h1v1h-1zM12 12h1v1h-1z" fill="#c0c0c0"/><rect x="2" y="1" width="5" height="1" fill="#808080"/><rect x="1" y="2" width="1" height="1" fill="#808080"/><rect x="7" y="2" width="1" height="1" fill="#808080"/><rect x="0" y="3" width="1" height="10" fill="#808080"/><rect x="8" y="3" width="6" height="1" fill="#808080"/><rect x="1" y="12" width="13" height="1" fill="#808080"/><rect x="1" y="3" width="1" height="9" fill="#ffffff"/><rect x="2" y="4" width="12" height="1" fill="#ffffff"/><rect x="14" y="3" width="1" height="11" fill="#000000"/><rect x="1" y="13" width="14" height="1" fill="#000000"/></svg><div class="t nm">Windows NT</div><div class="t c2">C:\Program Files</div><div class="t c4">File Folder</div><div class="t n c5">12/07/99 10:36</div></div>
</div>
<!-- scrollbar -->
<div class="a" style="left:622px;top:231px;width:16px;height:200px;background-color:#fff;background-image:linear-gradient(45deg,#c0c0c0 25%,transparent 25%,transparent 75%,#c0c0c0 75%),linear-gradient(45deg,#c0c0c0 25%,transparent 25%,transparent 75%,#c0c0c0 75%);background-size:2px 2px;background-position:0 0,1px 1px"></div>
<div class="btn sb" style="left:622px;top:231px;width:16px;height:16px"><svg class="a" style="left:4px;top:6px" width="7" height="4" shape-rendering="crispEdges"><path d="M3 0h1v1h1v1h1v1h1v1h-7v-1h1v-1h1v-1h1z" fill="#000"/></svg></div>
<div class="btn sb" style="left:622px;top:247px;width:16px;height:8px"></div>
<div class="btn sb" style="left:622px;top:415px;width:16px;height:16px"><svg class="a" style="left:4px;top:6px" width="7" height="4" shape-rendering="crispEdges"><path d="M0 0h7v1h-1v1h-1v1h-1v1h-1v-1h-1v-1h-1v-1h-1z" fill="#000"/></svg></div>

<!-- status -->
<div class="sp" style="left:0;width:216px"><div class="t" style="left:3px;top:3px">449 file(s) found</div></div>
<div class="sp" style="left:218px;width:166px"></div>
<div class="sp" style="left:386px;width:238px"></div>
<div class="a" style="left:0;top:455px;width:640px;height:1px;background:#dfdfdf"></div>
</body></html>
